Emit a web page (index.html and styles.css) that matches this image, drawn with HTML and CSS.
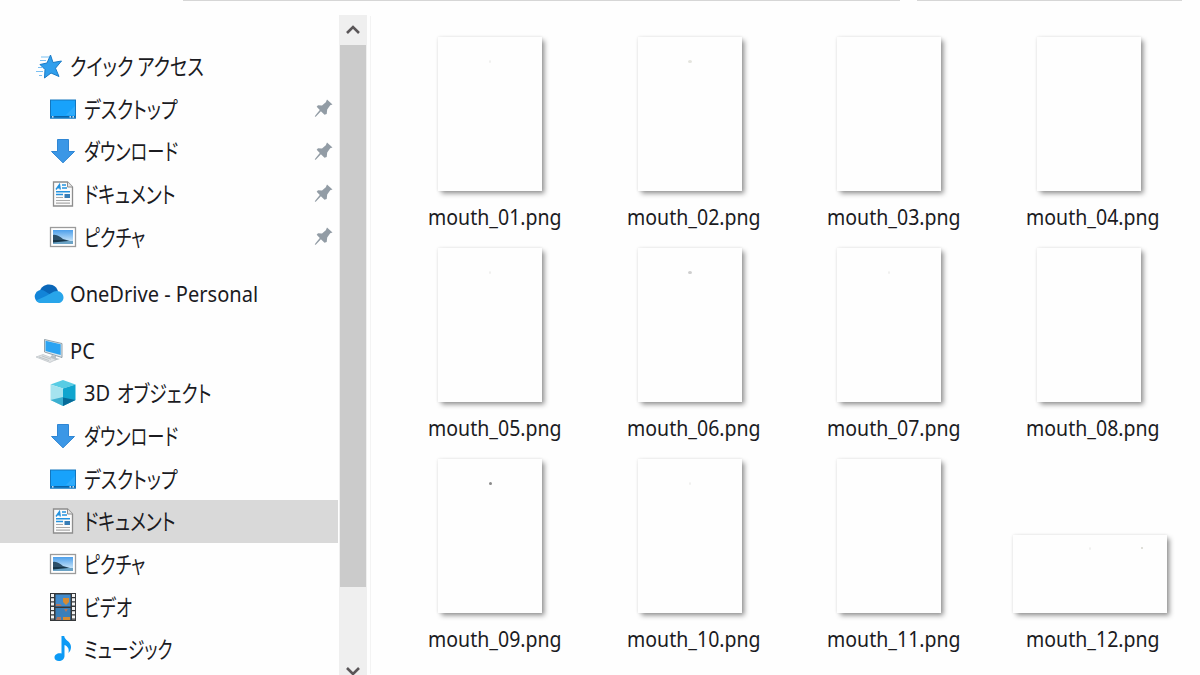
FILE: index.html
```html
<!DOCTYPE html>
<html lang="ja">

<head>
    <meta charset="UTF-8">
    <meta name="viewport" content="width=device-width, initial-scale=1.0">
    <title>ドキュメント</title>
    <link rel="stylesheet" href="styles.css">
</head>

<body>
    <!-- icons used more than once -->
    <svg class="defs" width="0" height="0">
        <defs>
            <linearGradient id="sky" x1="0" y1="0" x2="0" y2="1">
                <stop offset="0" stop-color="#4d9fea"/>
                <stop offset="1" stop-color="#e4f4fc"/>
            </linearGradient>
            <symbol id="desktop" viewBox="0 0 28 28">
                <rect x="1.5" y="5" width="25" height="18.2" fill="#18a2fb" stroke="#1476bd"/>
                <path d="M17 20l9-9v9z" fill="#2fabfb"/>
                <path d="M2 21.8h24" stroke="#0b5c9c" stroke-width="1.4"/>
                <path d="M3 21.8h1.5M20.5 21.8h1.5M23.5 21.8h1.5" stroke="#fff" stroke-width="1.2"/>
            </symbol>
            <symbol id="download" viewBox="0 0 28 28">
                <path d="M8.5 2.500h11v12h6L14 25.800 2.500 14.500h6z" fill="#3b97e6" stroke="#2f86d4"/>
            </symbol>
            <symbol id="document" viewBox="0 0 28 28">
                <path d="M4.500 2h14l5 5v19h-19z" fill="#fbfbfb" stroke="#8d8d8d" stroke-width="1.300"/>
                <path d="M18.500 2v5h5" fill="#e5e5e5" stroke="#8d8d8d"/>
                <path d="M7 9.500l3.500-5 .8 5M8.500 7.800h3M13 5h4M13 8h5M7 11.800h14M7 14.500h7" fill="none" stroke="#2492de" stroke-width="1.400"/>
                <path d="M7 17.500h7M7 20.500h14M7 23.200h14" stroke="#aaa" stroke-width="1.200"/>
                <rect x="15.500" y="14" width="5.500" height="4" fill="#377cb5"/>
            </symbol>
            <symbol id="picture" viewBox="0 0 28 28">
                <rect x="1.500" y="4.500" width="25" height="19" fill="#fff" stroke="#9b9b9b" stroke-width="1.300"/>
                <rect x="4" y="7" width="20" height="14" fill="url(#sky)"/>
                <path d="M4 12c4-1 7 2 10 4l7 2H4z" fill="#2c4f68"/>
                <path d="M4 18h20v3H4z" fill="#6ba3c6"/>
                <path d="M4 17h11l4 1-15 1.500z" fill="#173548"/>
            </symbol>
            <symbol id="pin" viewBox="0 0 20 20">
                <path d="M13 1.500l5.500 5-2.300.8-3 4.200-.5 4.500-2.200.8-3.600-3.600L2 18.500l-1.200.5.500-1.500 4.500-5.400-3.100-3.300 1.300-1.500 4 .2 3.800-3.200z" fill="#929ca5"/>
            </symbol>
        </defs>
    </svg>

    <div class="explorer">
        <div class="topbar">
            <div class="address"></div>
            <div class="search"></div>
        </div>

        <nav class="sidebar">
            <ul class="group">
                <li class="item root">
                    <svg class="icon" viewBox="0 0 28 28">
                        <path d="M15.500 3l2.500 7.500 8.500-1.500-6 7.200 3.500 8.300-8-3.500-6.500 5 .5-8.500-5-5 7-1.500z" fill="#309fed" stroke="#1a7bc7"/>
                        <path d="M6 5h8M5 8.500h6M3 15.500h5M1 19.500h7M4 23.500h3" stroke="#79bff2" stroke-width="1.200"/>
                    </svg>
                    <span class="name kana loose">クイック アクセス</span>
                </li>
                <li class="item"><svg class="icon"><use href="#desktop"/></svg><span class="name kana wide">デスクトップ</span><svg class="pin"><use href="#pin"/></svg></li>
                <li class="item"><svg class="icon"><use href="#download"/></svg><span class="name kana">ダウンロード</span><svg class="pin"><use href="#pin"/></svg></li>
                <li class="item"><svg class="icon"><use href="#document"/></svg><span class="name kana wide">ドキュメント</span><svg class="pin"><use href="#pin"/></svg></li>
                <li class="item"><svg class="icon"><use href="#picture"/></svg><span class="name kana">ピクチャ</span><svg class="pin"><use href="#pin"/></svg></li>
            </ul>

            <ul class="group">
                <li class="item root">
                    <svg class="icon cloud" viewBox="0 0 30 20">
                        <path d="M5.500 8C7 2.500 11 .5 15 .5c5 0 8 3 9 7l-9 5z" fill="#0966b8"/>
                        <path d="M7 19a6.500 6.500 0 1 1 4-11.800L25 16l-7 3z" fill="#1284d8"/>
                        <path d="M12 12l8-4.500c5-2 9.500 1.500 9.500 6 0 3.500-2.500 5.500-5.500 5.500H7c-2.500 0-4-1-5-2.500z" fill="#28a5ea"/>
                    </svg>
                    <span class="name">OneDrive - Personal</span>
                </li>
            </ul>

            <ul class="group">
                <li class="item root">
                    <svg class="icon" viewBox="0 0 28 28">
                        <path d="M9.500 2.500l17.500 4v14L9.500 15z" fill="#dfe8ed" stroke="#7b8d98" stroke-width=".8"/>
                        <path d="M10.500 3.800l15.200 3.500v10.700l-15.200-4z" fill="#2ba3f2"/>
                        <path d="M17 18l4 1v2l4 1-5 1.500-6-2z" fill="#b9c1c6"/>
                        <path d="M1 20l7-2.500L21 22.500l-6 3z" fill="#e0e3e5" stroke="#bcc2c6" stroke-width=".7"/>
                        <path d="M4 20l10 3.500M7 19l9 3.200" stroke="#b5bcc0" stroke-width=".8"/>
                    </svg>
                    <span class="name">PC</span>
                </li>
                <li class="item">
                    <svg class="icon" viewBox="0 0 28 28">
                        <path d="M1.500 5.500L14 1l12.500 4.500L14 9.500z" fill="#58cce4"/>
                        <path d="M1.500 5.500L14 9.500V27L1.500 21z" fill="#a5e3ef"/>
                        <path d="M14 9.500l12.500-4V21L14 27z" fill="#10a5ce"/>
                        <path d="M1.500 21L14 18v9z" fill="#3bafd0"/>
                        <path d="M14 18.500l12.500 2.500L14 27z" fill="#076b99"/>
                    </svg>
                    <span class="name">3D</span><span class="name kana wide second">オブジェクト</span>
                </li>
                <li class="item"><svg class="icon"><use href="#download"/></svg><span class="name kana">ダウンロード</span></li>
                <li class="item"><svg class="icon"><use href="#desktop"/></svg><span class="name kana wide">デスクトップ</span></li>
                <li class="item selected"><svg class="icon"><use href="#document"/></svg><span class="name kana wide">ドキュメント</span></li>
                <li class="item"><svg class="icon"><use href="#picture"/></svg><span class="name kana">ピクチャ</span></li>
                <li class="item">
                    <svg class="icon" viewBox="0 0 28 28">
                        <rect x="1" y="0" width="26" height="28" fill="#35383b"/>
                        <rect x="6.500" y="1.500" width="15" height="12" fill="#438bcb"/>
                        <rect x="6.500" y="15" width="15" height="12" fill="#397fba"/>
                        <path d="M3.500 1v26M24.500 1v26" stroke="#f2f2f2" stroke-width="3" stroke-dasharray="3 1.300"/>
                        <path d="M14 5h6v4l-3 3-3-3zM14 24h7v3h-7z" fill="#d68b32"/>
                        <path d="M7 11h4l2 2H7zM15 16h4l-2 3zM8 24h4v3H7z" fill="#b07761"/>
                    </svg>
                    <span class="name kana">ビデオ</span>
                </li>
                <li class="item">
                    <svg class="icon" viewBox="0 0 28 28">
                        <path d="M12.500 1h2.700c.3 4.500 6.800 5 6.800 11 0 2.500-1 4.500-2.500 6 .8-4-.5-6.500-4-8v11c0 3-2.700 5-5.500 5S5.500 24.500 5.500 22.500c0-3 3.500-5 7-4z" fill="#0c9af5"/>
                    </svg>
                    <span class="name kana tight">ミュージック</span>
                </li>
            </ul>
        </nav>

        <div class="scrollbar">
            <svg class="arrow" viewBox="0 0 14 10"><path d="M1 8l6-6 6 6"/></svg>
            <div class="thumb"></div>
            <svg class="arrow down" viewBox="0 0 14 10"><path d="M1 2l6 6 6-6"/></svg>
        </div>

        <main class="files">
            <div class="file"><div class="preview"><i class="dot faint"></i></div><span class="label">mouth_01.png</span></div>
            <div class="file"><div class="preview"><i class="dot"></i></div><span class="label">mouth_02.png</span></div>
            <div class="file"><div class="preview"></div><span class="label">mouth_03.png</span></div>
            <div class="file"><div class="preview"></div><span class="label">mouth_04.png</span></div>
            <div class="file"><div class="preview"><i class="dot faint"></i></div><span class="label">mouth_05.png</span></div>
            <div class="file"><div class="preview"><i class="dot mid"></i></div><span class="label">mouth_06.png</span></div>
            <div class="file"><div class="preview"><i class="dot faint"></i></div><span class="label">mouth_07.png</span></div>
            <div class="file"><div class="preview"></div><span class="label">mouth_08.png</span></div>
            <div class="file"><div class="preview"><i class="dot dark"></i></div><span class="label">mouth_09.png</span></div>
            <div class="file"><div class="preview"><i class="dot faint"></i></div><span class="label">mouth_10.png</span></div>
            <div class="file"><div class="preview"></div><span class="label">mouth_11.png</span></div>
            <div class="file"><div class="preview landscape"><i class="dot faint"></i><i class="dot small"></i></div><span class="label">mouth_12.png</span></div>
        </main>
    </div>
</body>

</html>
```
FILE: styles.css
```css
* {
    box-sizing: border-box;
}

body {
    margin: 0;
    background: #fefefe;
    color: #1b1b1f;
    font-family: "Noto Sans", "Noto Sans CJK JP", sans-serif;
    font-size: 21px;
    overflow: hidden;
}

.defs {
    display: block;
}

.explorer {
    display: grid;
    grid-template-columns: 339px 29px 1fr;
    grid-template-rows: 15px 660px;
    width: 1200px;
    height: 675px;
    overflow: hidden;
}

.topbar {
    grid-column: 1 / -1;
    display: flex;
    gap: 17px;
    padding-left: 183px;
}

.address,
.search {
    height: 1px;
    background: #d6d6d6;
}

.address {
    width: 717px;
}

.search {
    width: 265px;
}

/* navigation pane */
.sidebar {
    padding-top: 29.5px;
}

.group {
    list-style: none;
    margin: 0 0 14.3px;
    padding: 0;
}

.item {
    display: flex;
    align-items: center;
    height: 42.7px;
    padding: 0 4px 0 49px;
    width: 338px;
}

.item.root {
    padding-left: 35px;
}

.item.selected {
    background: #d9d9d9;
}

.icon {
    width: 28px;
    height: 28px;
    flex: none;
    margin-right: 7px;
}

.icon.cloud {
    width: 30px;
    height: 20px;
    margin: 0 6px 0 -1px;
}

.name {
    display: block;
    white-space: nowrap;
    line-height: 30px;
    transform: scaleX(0.955);
    transform-origin: left center;
}

/* narrow proportional kana, like the system UI font */
.name.kana {
    font-family: "Noto Sans CJK JP", sans-serif;
    font-size: 23px;
    font-feature-settings: "palt";
    line-height: 28px;
    padding-bottom: 2px;
    transform: scaleX(0.75);
}

.name.wide {
    transform: scaleX(0.78);
}

.name.loose {
    transform: scaleX(0.795);
}

.name.tight {
    transform: scaleX(0.725);
}

.name.second {
    margin-left: 6px;
}

.pin {
    width: 20px;
    height: 20px;
    margin-left: auto;
    margin-bottom: 1px;
    flex: none;
}

/* scrollbar */
.scrollbar {
    display: flex;
    flex-direction: column;
    align-items: center;
    width: 28px;
    background: #efefef;
    box-shadow: 4px 0 0 -1px #fefefe, 5px 0 0 -1px #f3f3f3;
}

.arrow {
    width: 14px;
    height: 10px;
    margin: 10px 0;
    flex: none;
}

.arrow path {
    fill: none;
    stroke: #5a5658;
    stroke-width: 2.6;
}

.arrow.down {
    margin: auto 0 -1px;
}

.thumb {
    width: 26px;
    height: 542px;
    background: #cbcbcb;
}

/* file grid */
.files {
    display: grid;
    grid-template-columns: repeat(4, 199.5px);
    grid-auto-rows: 211px;
    padding: 22px 0 0 27px;
}

.file {
    display: flex;
    flex-direction: column;
    align-items: center;
    justify-content: flex-end;
    height: 196px;
}

.preview {
    display: flex;
    justify-content: center;
    flex: none;
    width: 104px;
    height: 154px;
    margin-right: 9px;
    padding-top: 23px;
    background: #fefefe;
    box-shadow: 2.5px 2.5px 5px rgba(0, 0, 0, 0.42), 0 0 3px rgba(0, 0, 0, 0.1);
}

.preview.landscape {
    width: 154px;
    height: 78px;
    margin-right: 7px;
    padding: 12px 24px 0 0;
    justify-content: flex-end;
    gap: 50px;
}

.dot {
    width: 4px;
    height: 3px;
    border-radius: 50%;
    background: #e4e4de;
}

.dot.faint {
    width: 2px;
    background: #f0f0ee;
}

.dot.mid {
    background: #cecece;
}

.dot.dark {
    width: 3px;
    background: #8a8a8a;
}

.dot.small {
    width: 2px;
    height: 2px;
    background: #d5d5cc;
}

.label {
    height: 42px;
    line-height: 53px;
    transform: scaleX(0.93);
}
```
